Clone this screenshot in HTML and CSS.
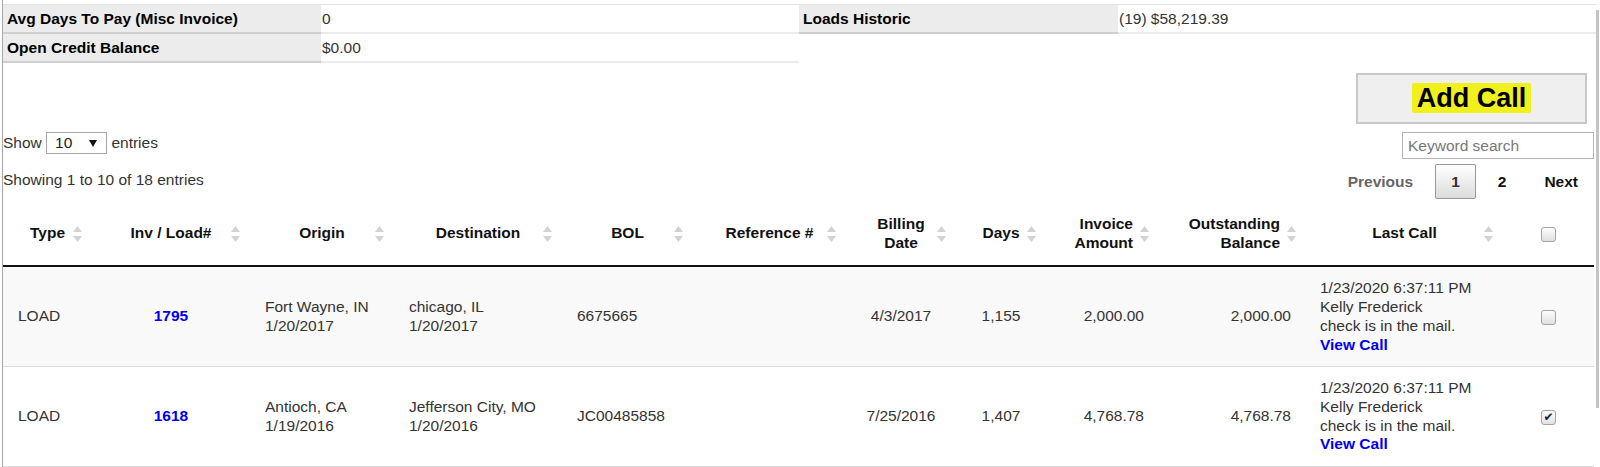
FILE: index.html
```html
<!DOCTYPE html>
<html>
<head>
  <title>Customer Aging</title>
  <link rel="stylesheet" href="styles.css">
</head>
<body>
  <div class="page">
    <div class="scroll-thumb"></div>

    <table class="summary">
      <colgroup>
        <col class="w-label1"><col class="w-value1"><col class="w-label2"><col class="w-value2">
      </colgroup>
      <tr class="first">
        <th class="label">Avg Days To Pay (Misc Invoice)</th>
        <td class="value">0</td>
        <th class="label">Loads Historic</th>
        <td class="value">(19) $58,219.39</td>
      </tr>
      <tr>
        <th class="label">Open Credit Balance</th>
        <td class="value">$0.00</td>
      </tr>
    </table>

    <div class="toolbar">
      <div class="toolbar-left">
        <div class="length">Show <span class="select"><span>10</span><svg class="caret" viewBox="0 0 8 7"><path d="M0 0H8L4 7Z"/></svg></span> entries</div>
        <div class="info">Showing 1 to 10 of 18 entries</div>
      </div>
      <div class="toolbar-right">
        <button type="button" class="add-call"><mark>Add Call</mark></button>
        <input type="text" class="search" placeholder="Keyword search">
        <div class="paginate">
          <a class="page-btn disabled">Previous</a>
          <a class="page-btn current">1</a>
          <a class="page-btn">2</a>
          <a class="page-btn">Next</a>
        </div>
      </div>
    </div>

    <table class="grid">
      <colgroup>
        <col class="c-type"><col class="c-inv"><col class="c-origin"><col class="c-dest">
        <col class="c-bol"><col class="c-ref"><col class="c-bill"><col class="c-days">
        <col class="c-amt"><col class="c-bal"><col class="c-call"><col class="c-check">
      </colgroup>
      <thead>
        <tr>
          <th>Type<svg class="sort" viewBox="0 0 9 18"><path d="M4.5 1L9 7H0Z"/><path d="M0 11H9L4.5 17Z"/></svg></th>
          <th>Inv / Load#<svg class="sort" viewBox="0 0 9 18"><path d="M4.5 1L9 7H0Z"/><path d="M0 11H9L4.5 17Z"/></svg></th>
          <th>Origin<svg class="sort" viewBox="0 0 9 18"><path d="M4.5 1L9 7H0Z"/><path d="M0 11H9L4.5 17Z"/></svg></th>
          <th>Destination<svg class="sort" viewBox="0 0 9 18"><path d="M4.5 1L9 7H0Z"/><path d="M0 11H9L4.5 17Z"/></svg></th>
          <th>BOL<svg class="sort" viewBox="0 0 9 18"><path d="M4.5 1L9 7H0Z"/><path d="M0 11H9L4.5 17Z"/></svg></th>
          <th>Reference #<svg class="sort" viewBox="0 0 9 18"><path d="M4.5 1L9 7H0Z"/><path d="M0 11H9L4.5 17Z"/></svg></th>
          <th>Billing Date<svg class="sort" viewBox="0 0 9 18"><path d="M4.5 1L9 7H0Z"/><path d="M0 11H9L4.5 17Z"/></svg></th>
          <th>Days<svg class="sort" viewBox="0 0 9 18"><path d="M4.5 1L9 7H0Z"/><path d="M0 11H9L4.5 17Z"/></svg></th>
          <th class="num">Invoice Amount<svg class="sort" viewBox="0 0 9 18"><path d="M4.5 1L9 7H0Z"/><path d="M0 11H9L4.5 17Z"/></svg></th>
          <th class="num">Outstanding Balance<svg class="sort" viewBox="0 0 9 18"><path d="M4.5 1L9 7H0Z"/><path d="M0 11H9L4.5 17Z"/></svg></th>
          <th>Last Call<svg class="sort" viewBox="0 0 9 18"><path d="M4.5 1L9 7H0Z"/><path d="M0 11H9L4.5 17Z"/></svg></th>
          <th class="check"><input type="checkbox" class="cb"></th>
        </tr>
      </thead>
      <tbody>
        <tr class="odd">
          <td>LOAD</td>
          <td class="center"><a class="link" href="#">1795</a></td>
          <td>Fort Wayne, IN<br>1/20/2017</td>
          <td>chicago, IL<br>1/20/2017</td>
          <td>6675665</td>
          <td></td>
          <td class="center">4/3/2017</td>
          <td class="center">1,155</td>
          <td class="right">2,000.00</td>
          <td class="right">2,000.00</td>
          <td class="call">1/23/2020 6:37:11 PM<br>Kelly Frederick<br>check is in the mail.<br><a class="link" href="#">View Call</a></td>
          <td class="center"><input type="checkbox" class="cb"></td>
        </tr>
        <tr>
          <td>LOAD</td>
          <td class="center"><a class="link" href="#">1618</a></td>
          <td>Antioch, CA<br>1/19/2016</td>
          <td>Jefferson City, MO<br>1/20/2016</td>
          <td>JC00485858</td>
          <td></td>
          <td class="center">7/25/2016</td>
          <td class="center">1,407</td>
          <td class="right">4,768.78</td>
          <td class="right">4,768.78</td>
          <td class="call">1/23/2020 6:37:11 PM<br>Kelly Frederick<br>check is in the mail.<br><a class="link" href="#">View Call</a></td>
          <td class="center"><input type="checkbox" class="cb" checked></td>
        </tr>
      </tbody>
    </table>
  </div>
</body>
</html>
```

FILE: styles.css
```css
body {
  margin: 0;
  font-family: "Liberation Sans", Arial, sans-serif;
  font-size: 15.5px;
  color: #333;
  background: #fff;
  overflow: hidden;
}
.page {
  position: relative;
  width: 1591px;
  margin-left: 2px;
  padding-top: 4px;
  border-left: 1px solid #a8a8a8;
  min-height: 463px;
}
.scroll-thumb {
  position: absolute;
  left: 1593px;
  top: 10px;
  width: 3px;
  height: 398px;
  background: #c4c4c4;
}

/* summary block */
.summary {
  width: 1593px;
  border-collapse: separate;
  border-spacing: 0;
  table-layout: fixed;
}
.w-label1 { width: 318px; }
.w-value1 { width: 478px; }
.w-label2 { width: 319px; }
.w-value2 { width: 478px; }
.summary th,
.summary td {
  line-height: 27px;
  padding: 0;
  text-align: left;
  white-space: nowrap;
}
.summary tr.first th,
.summary tr.first td {
  border-top: 1px solid #e3e3e3;
}
.summary .label {
  background: #ececec;
  color: #000;
  font-weight: bold;
  padding-left: 4px;
  border-bottom: 2px solid #cfcfcf;
}
.summary .value {
  color: #333;
  padding-left: 1px;
  border-bottom: 2px solid #ebebeb;
}

/* toolbar */
.toolbar {
  display: flex;
  justify-content: space-between;
}
.toolbar-left {
  padding-top: 69px;
}
.length {
  display: flex;
  align-items: center;
  height: 22px;
  white-space: pre;
}
.select {
  display: inline-flex;
  align-items: center;
  justify-content: space-between;
  box-sizing: border-box;
  width: 61px;
  height: 22px;
  padding: 0 9px 0 8px;
  border: 1px solid #a6a6a6;
  color: #222;
}
.caret {
  width: 8px;
  height: 7px;
  fill: #111;
}
.info {
  margin-top: 16px;
  line-height: 19px;
}
.toolbar-right {
  display: flex;
  flex-direction: column;
  align-items: flex-end;
}
.add-call {
  box-sizing: border-box;
  width: 231px;
  height: 51px;
  margin-top: 10px;
  margin-right: 7px;
  padding: 0;
  background: #efefef;
  border: 2px solid #c8c8c8;
  font-family: "Liberation Sans", Arial, sans-serif;
  font-size: 27px;
  font-weight: bold;
  color: #000;
}
.add-call mark {
  background: #f0f01e;
  color: #000;
  padding: 0 5px;
  border-radius: 2px;
}
.search {
  box-sizing: border-box;
  width: 192px;
  height: 27px;
  margin: 8px 0 0;
  padding: 0 5px;
  border: 1px solid #b4b4b4;
  font-family: "Liberation Sans", Arial, sans-serif;
  font-size: 15.5px;
  color: #333;
}
.search::placeholder {
  color: #777;
}
.paginate {
  display: flex;
  gap: 6px;
  margin-top: 5px;
}
.page-btn {
  padding: 7px 15px;
  border: 1px solid transparent;
  border-radius: 2px;
  font-weight: bold;
  line-height: 19px;
  color: #111;
  cursor: pointer;
}
.page-btn.disabled {
  color: #666;
  cursor: default;
}
.page-btn.current {
  border-color: #979797;
  background: linear-gradient(#fff, #dcdcdc);
  color: #333;
}

/* data grid */
.grid {
  width: 1591px;
  margin-top: 4px;
  table-layout: fixed;
  border-collapse: collapse;
}
.c-type { width: 89px; }
.c-inv { width: 158px; }
.c-origin { width: 144px; }
.c-dest { width: 168px; }
.c-bol { width: 131px; }
.c-ref { width: 153px; }
.c-bill { width: 110px; }
.c-days { width: 90px; }
.c-amt { width: 113px; }
.c-bal { width: 147px; }
.c-call { width: 197px; }
.c-check { width: 91px; }
.grid th {
  position: relative;
  padding: 12px 24px 13px;
  line-height: 18.7px;
  font-weight: bold;
  color: #111;
  text-align: center;
  vertical-align: middle;
  border-bottom: 2px solid #111;
}
.grid th.num {
  text-align: right;
  padding: 12px 26px 13px 10px;
}
.grid th.check {
  padding: 12px 0 13px;
}
.sort {
  position: absolute;
  right: 10px;
  top: 50%;
  width: 9px;
  height: 18px;
  margin-top: -9px;
  fill: #d2d2d2;
}
.grid td {
  padding: 12px 15px;
  line-height: 18.7px;
  color: #333;
  vertical-align: middle;
  border-bottom: 1px solid #dcdcdc;
}
.grid tr.odd td {
  background: #f9f9f9;
}
.grid td.center { text-align: center; }
.grid td.right { text-align: right; }
.grid td.call { padding-left: 14px; }
.link {
  color: #0000ee;
  font-weight: bold;
  text-decoration: none;
}
.cb {
  appearance: none;
  -webkit-appearance: none;
  position: relative;
  box-sizing: border-box;
  width: 15px;
  height: 15px;
  margin: 0;
  vertical-align: middle;
  border: 1px solid #a3a3a3;
  border-radius: 3px;
  background: linear-gradient(#fdfdfd, #e0e0e0);
}
.cb:checked::after {
  content: "\2714";
  position: absolute;
  left: 0;
  top: 0;
  width: 13px;
  line-height: 13px;
  text-align: center;
  font-family: "DejaVu Sans", sans-serif;
  font-size: 12px;
  color: #222;
}
```
